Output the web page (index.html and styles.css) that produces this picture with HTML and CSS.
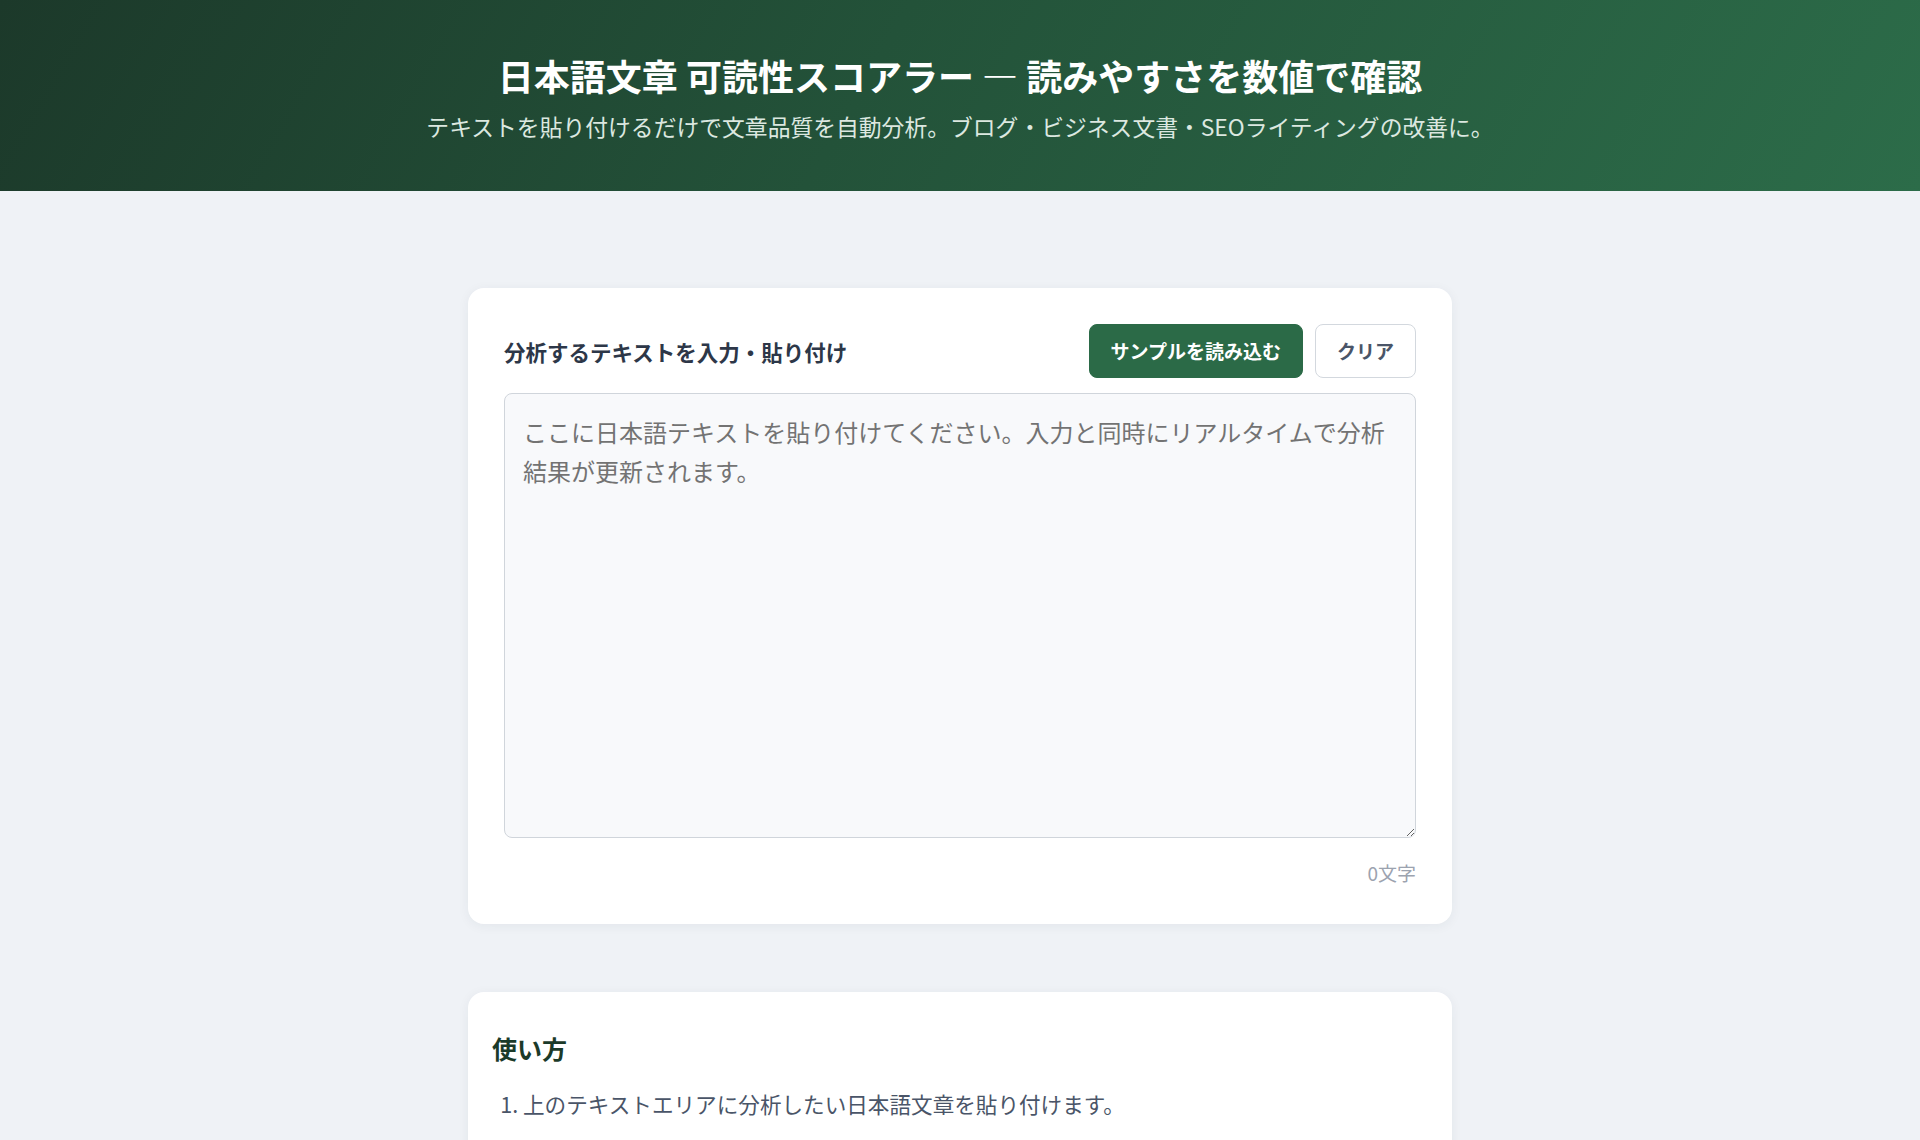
FILE: index.html
```html
<!DOCTYPE html>
<html lang="ja">
<head>
  <meta charset="UTF-8">
  <meta name="viewport" content="width=device-width, initial-scale=1.0">
  <title>日本語文章 可読性スコアラー</title>
  <link rel="stylesheet" href="styles.css">
</head>
<body>

  <header class="site-header">
    <h1>日本語文章 可読性スコアラー — 読みやすさを数値で確認</h1>
    <p class="lead">テキストを貼り付けるだけで文章品質を自動分析。ブログ・ビジネス文書・SEOライティングの改善に。</p>
  </header>

  <main class="container">

    <section class="card input-card">
      <div class="input-head">
        <label for="source" class="input-label">分析するテキストを入力・貼り付け</label>
        <div class="actions">
          <button class="btn btn-primary" id="sampleBtn">サンプルを読み込む</button>
          <button class="btn btn-ghost" id="clearBtn">クリア</button>
        </div>
      </div>
      <textarea id="source" placeholder="ここに日本語テキストを貼り付けてください。入力と同時にリアルタイムで分析結果が更新されます。"></textarea>
      <div class="char-count" id="charCount">0文字</div>
    </section>

    <section class="card howto">
      <h2>使い方</h2>
      <ol>
        <li>上のテキストエリアに分析したい日本語文章を貼り付けます。</li>
        <li>入力と同時にスコアと各指標が自動で計算されます。</li>
        <li>改善ポイントを参考に文章を書き直して、スコアの変化を確認します。</li>
      </ol>
    </section>

  </main>

  <script>
    const source = document.getElementById('source');
    const charCount = document.getElementById('charCount');

    function updateCount() {
      charCount.textContent = `${source.value.length}文字`;
    }

    source.addEventListener('input', updateCount);

    document.getElementById('clearBtn').addEventListener('click', () => {
      source.value = '';
      updateCount();
    });

    document.getElementById('sampleBtn').addEventListener('click', () => {
      source.value = '文章は短く、わかりやすく書くことが大切です。一文に多くの情報を詰め込むと、読み手は途中で内容を見失ってしまいます。';
      updateCount();
    });
  </script>

</body>
</html>
```

FILE: styles.css
```css
body {
  margin: 0;
  padding: 0;
  font-family: "Noto Sans CJK JP", "Noto Sans", sans-serif;
  background-color: #eff2f6;
  color: #2d3748;
}

/* Header */
.site-header {
  background: linear-gradient(120deg, #1c392a 0%, #235239 45%, #2c6c49 100%);
  color: #fff;
  text-align: center;
  padding: 52px 20px 47px;
}

.site-header h1 {
  margin: 0 0 11px;
  font-size: 36px;
  line-height: 1.3;
  font-weight: 700;
}

.lead {
  margin: 0;
  font-size: 22.8px;
  line-height: 1.5;
  color: #dce8e0;
}

.container {
  width: 984px;
  margin: 0 auto;
  padding: 97px 0 60px;
}

.card {
  background-color: #fff;
  border-radius: 16px;
  box-shadow: 0 2px 12px rgba(30, 50, 70, 0.06);
}

/* Input card */
.input-card {
  padding: 36px;
  margin-bottom: 68px;
}

.input-head {
  display: flex;
  justify-content: space-between;
  align-items: center;
  margin-bottom: 15px;
}

.input-label {
  font-size: 21.5px;
  font-weight: 700;
  color: #2d3748;
}

.actions {
  display: flex;
  gap: 12px;
}

.btn {
  font-family: inherit;
  font-size: 19px;
  font-weight: 700;
  line-height: 1.5;
  padding: 12px 21px;
  border-radius: 8px;
  cursor: pointer;
}

.btn-primary {
  background-color: #2b6a47;
  border: 1px solid #2b6a47;
  color: #fff;
}

.btn-ghost {
  background-color: #fff;
  border: 1px solid #d3d8de;
  color: #4a5568;
}

textarea {
  display: block;
  width: 100%;
  height: 445px;
  box-sizing: border-box;
  padding: 18px;
  border: 1px solid #d0d5db;
  border-radius: 8px;
  background-color: #f8f9fb;
  font-family: inherit;
  font-size: 24px;
  line-height: 39px;
  color: #2d3748;
  resize: vertical;
}

textarea::placeholder {
  color: #737373;
}

.char-count {
  margin-top: 21px;
  text-align: right;
  font-size: 19px;
  line-height: 1.5;
  color: #9ca3af;
}

/* How to */
.howto {
  padding: 24px;
}

.howto h2 {
  margin: 16px 0 22px;
  font-size: 25px;
  line-height: 1.3;
  color: #1b3a29;
}

.howto ol {
  margin: 0;
  padding-left: 31px;
}

.howto li {
  font-size: 21.6px;
  line-height: 1.7;
  color: #4a5568;
  margin-bottom: 22px;
}
```
